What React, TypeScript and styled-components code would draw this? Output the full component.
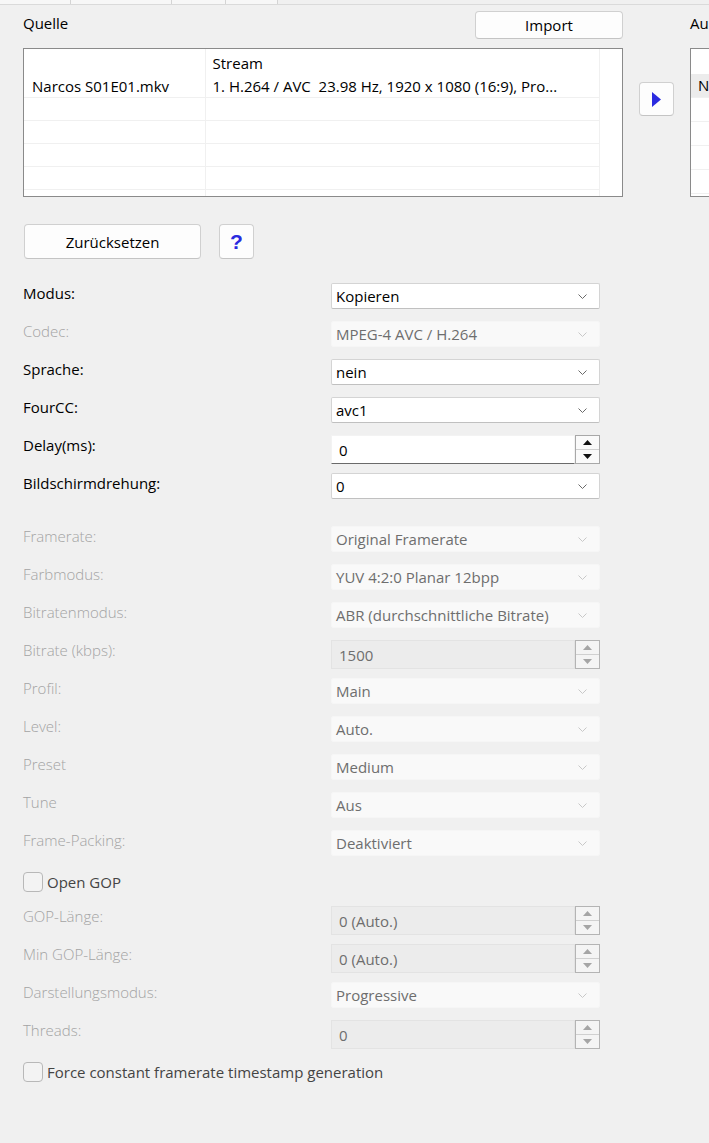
import * as React from 'react';
import styled, { createGlobalStyle } from 'styled-components';

const GlobalStyle = createGlobalStyle`
    html, body {
        margin: 0;
        padding: 0;
        background: #f0f0f0;
    }
    body {
        font-family: "Open Sans", "Noto Sans", "DejaVu Sans", sans-serif;
        font-size: 15px;
        color: #000;
    }
`;

const Page = styled.div`
    width: 709px;
    height: 1143px;
    overflow: hidden;
    background: #f0f0f0;
    display: flex;
    flex-direction: column;
`;

const TabStrip = styled.div`
    display: flex;
    height: 4px;
    border-bottom: 1px solid #dadada;
    flex-shrink: 0;
`;

const Tab = styled.div<{ $w: number }>`
    width: ${p => p.$w}px;
    height: 4px;
    background: #f7f7f7;
    border-right: 1px solid #d4d4d4;
    box-sizing: border-box;
`;

const TopArea = styled.div`
    display: grid;
    grid-template-columns: 600px 35px 200px;
    column-gap: 16px;
    padding: 6px 0 0 23px;
`;

const SourceColumn = styled.div`
    display: flex;
    flex-direction: column;
    gap: 10px;
`;

const SectionHeader = styled.div`
    display: flex;
    justify-content: space-between;
    align-items: flex-start;
    height: 27px;
`;

const Caption = styled.div`
    font-stretch: 88%;
    font-size: 15px;
    line-height: 20px;
    padding-top: 2px;
`;

const PushButton = styled.button<{ $w: number; $h: number }>`
    width: ${p => p.$w}px;
    height: ${p => p.$h}px;
    background: #fdfdfd;
    border: 1px solid #d0d0d0;
    border-bottom-color: #c4c4c4;
    border-radius: 4px;
    font-family: "Open Sans", "Noto Sans", sans-serif;
    font-stretch: 88%;
    font-size: 15px;
    color: #000;
    padding: 0;
    display: flex;
    align-items: center;
    justify-content: center;
`;

const HelpGlyph = styled.span`
    color: #2a2adf;
    font-family: "Liberation Sans", Arial, sans-serif;
    font-weight: 700;
    font-size: 21px;
`;

const TableFrame = styled.div`
    height: 149px;
    border: 1px solid #8a8a8a;
    background: #fff;
    box-sizing: border-box;
    overflow: hidden;
`;

const Table = styled.table`
    border-collapse: collapse;
    table-layout: fixed;
    width: 575px;
    font-stretch: 88%;
    font-size: 15px;
`;

const Tr = styled.tr<{ $h: number; $plain?: boolean }>`
    height: ${p => p.$h}px;
    border-bottom: ${p => (p.$plain ? 'none' : '1px solid #f0f0f0')};
`;

const Td = styled.td<{ $w?: number; $pad?: number }>`
    ${p => (p.$w ? `width: ${p.$w}px;` : '')}
    box-sizing: border-box;
    padding: 0 0 0 ${p => p.$pad ?? 7}px;
    border-right: 1px solid #f0f0f0;
    white-space: nowrap;
    overflow: hidden;
    vertical-align: bottom;
    line-height: 22px;
`;

const ArrowColumn = styled.div`
    padding-top: 71px;
`;

const OutputColumn = styled.div`
    display: flex;
    flex-direction: column;
    gap: 10px;
`;

const OutputFrame = styled.div`
    height: 149px;
    border: 1px solid #8a8a8a;
    border-right: none;
    background: #fff;
    box-sizing: border-box;
    padding-top: 25px;
`;

const OutputRow = styled.div<{ $selected?: boolean }>`
    height: 23px;
    border-bottom: 1px solid #f0f0f0;
    background: ${p => (p.$selected ? '#ececec' : '#fff')};
    padding-left: 7px;
    line-height: 23px;
    font-stretch: 88%;
`;

const ActionRow = styled.div`
    display: flex;
    gap: 18px;
    padding: 27px 0 0 24px;
`;

const Form = styled.div`
    display: flex;
    flex-direction: column;
    padding: 24px 0 0 23px;
`;

const FieldRow = styled.div`
    display: grid;
    grid-template-columns: 308px 269px;
    height: 38px;
    align-items: start;
`;

const Label = styled.div<{ $disabled?: boolean }>`
    line-height: 20px;
    font-size: 15px;
    color: ${p => (p.$disabled ? '#a3a3a3' : '#000')};
    font-weight: ${p => (p.$disabled ? 300 : 400)};
`;

const Spacer = styled.div<{ $h: number }>`
    height: ${p => p.$h}px;
`;

const ComboBox = styled.div<{ $disabled?: boolean }>`
    height: 26px;
    box-sizing: border-box;
    display: flex;
    align-items: center;
    justify-content: space-between;
    padding: 0 12px 0 4px;
    background: ${p => (p.$disabled ? '#f9f9f9' : '#fff')};
    border: 1px solid ${p => (p.$disabled ? '#f6f6f6' : '#d4d4d4')};
    border-bottom-color: ${p => (p.$disabled ? '#f6f6f6' : '#c0c0c0')};
    border-radius: 2px;
    color: ${p => (p.$disabled ? '#6e6e6e' : '#000')};
    font-size: 15px;
`;

const SpinBox = styled.div`
    display: flex;
    height: 29px;
`;

const SpinField = styled.div<{ $disabled?: boolean }>`
    flex: 1;
    box-sizing: border-box;
    display: flex;
    align-items: center;
    padding-left: 7px;
    background: ${p => (p.$disabled ? '#ececec' : '#fff')};
    border: 1px solid ${p => (p.$disabled ? '#e3e3e3' : '#f3f3f3')};
    border-bottom: 1px solid ${p => (p.$disabled ? '#e3e3e3' : '#6a6a6a')};
    color: ${p => (p.$disabled ? '#6e6e6e' : '#000')};
    font-size: 15px;
`;

const SpinButtons = styled.div<{ $disabled?: boolean }>`
    width: 25px;
    box-sizing: border-box;
    display: flex;
    flex-direction: column;
    border: 1px solid ${p => (p.$disabled ? '#b4b4b4' : '#a8a8a8')};
    background: ${p => (p.$disabled ? '#f4f4f4' : '#fafafa')};
`;

const SpinButton = styled.div<{ $disabled?: boolean }>`
    flex: 1;
    display: flex;
    align-items: center;
    justify-content: center;
    color: ${p => (p.$disabled ? '#a5a5a5' : '#111')};
    & + & {
        border-top: 1px solid ${p => (p.$disabled ? '#d0d0d0' : '#c4c4c4')};
    }
`;

const CheckRow = styled.label`
    display: flex;
    align-items: flex-start;
    gap: 4px;
    height: 38px;
    padding-top: 4px;
    box-sizing: border-box;
`;

const CheckBox = styled.span`
    width: 20px;
    height: 20px;
    box-sizing: border-box;
    border: 1px solid #b8b8b8;
    border-radius: 4px;
    background: #f3f3f3;
`;

const CheckText = styled.span`
    color: #444;
    font-stretch: 88%;
    font-size: 15px;
    line-height: 20px;
`;

const Chevron = ({ disabled }: { disabled?: boolean }) => (
    <svg width="9" height="5" viewBox="0 0 9 5">
        <path d="M0.5 0.5 L4.5 4.5 L8.5 0.5" fill="none" stroke={disabled ? '#c8c8c8' : '#6a6a6a'} strokeWidth="1" />
    </svg>
);

const Triangle = ({ up }: { up?: boolean }) => (
    <svg width="9" height="5" viewBox="0 0 9 5">
        <path d={up ? 'M0 5 L4.5 0 L9 5 Z' : 'M0 0 L4.5 5 L9 0 Z'} fill="currentColor" />
    </svg>
);

type Field =
    | { kind: 'combo'; label: string; value: string; disabled?: boolean }
    | { kind: 'spin'; label: string; value: string; disabled?: boolean }
    | { kind: 'check'; label: string }
    | { kind: 'gap'; h: number };

const fields: Field[] = [
    { kind: 'combo', label: 'Modus:', value: 'Kopieren' },
    { kind: 'combo', label: 'Codec:', value: 'MPEG-4 AVC / H.264', disabled: true },
    { kind: 'combo', label: 'Sprache:', value: 'nein' },
    { kind: 'combo', label: 'FourCC:', value: 'avc1' },
    { kind: 'spin', label: 'Delay(ms):', value: '0' },
    { kind: 'combo', label: 'Bildschirmdrehung:', value: '0' },
    { kind: 'gap', h: 15 },
    { kind: 'combo', label: 'Framerate:', value: 'Original Framerate', disabled: true },
    { kind: 'combo', label: 'Farbmodus:', value: 'YUV 4:2:0 Planar 12bpp', disabled: true },
    { kind: 'combo', label: 'Bitratenmodus:', value: 'ABR (durchschnittliche Bitrate)', disabled: true },
    { kind: 'spin', label: 'Bitrate (kbps):', value: '1500', disabled: true },
    { kind: 'combo', label: 'Profil:', value: 'Main', disabled: true },
    { kind: 'combo', label: 'Level:', value: 'Auto.', disabled: true },
    { kind: 'combo', label: 'Preset', value: 'Medium', disabled: true },
    { kind: 'combo', label: 'Tune', value: 'Aus', disabled: true },
    { kind: 'combo', label: 'Frame-Packing:', value: 'Deaktiviert', disabled: true },
    { kind: 'check', label: 'Open GOP' },
    { kind: 'spin', label: 'GOP-Länge:', value: '0 (Auto.)', disabled: true },
    { kind: 'spin', label: 'Min GOP-Länge:', value: '0 (Auto.)', disabled: true },
    { kind: 'combo', label: 'Darstellungsmodus:', value: 'Progressive', disabled: true },
    { kind: 'spin', label: 'Threads:', value: '0', disabled: true },
    { kind: 'check', label: 'Force constant framerate timestamp generation' },
];

const renderField = (f: Field, i: number) => {
    if (f.kind === 'gap') return <Spacer key={i} $h={f.h} />;
    if (f.kind === 'check') {
        return (
            <CheckRow key={i}>
                <CheckBox />
                <CheckText>{f.label}</CheckText>
            </CheckRow>
        );
    }
    return (
        <FieldRow key={i}>
            <Label $disabled={f.disabled}>{f.label}</Label>
            {f.kind === 'combo' ? (
                <ComboBox $disabled={f.disabled}>
                    <span>{f.value}</span>
                    <Chevron disabled={f.disabled} />
                </ComboBox>
            ) : (
                <SpinBox>
                    <SpinField $disabled={f.disabled}>{f.value}</SpinField>
                    <SpinButtons $disabled={f.disabled}>
                        <SpinButton $disabled={f.disabled}><Triangle up /></SpinButton>
                        <SpinButton $disabled={f.disabled}><Triangle /></SpinButton>
                    </SpinButtons>
                </SpinBox>
            )}
        </FieldRow>
    );
};

const emptyRows = [0, 1, 2, 3, 4];

const App = () => (
    <Page>
        <GlobalStyle />
        <TabStrip>
            <Tab $w={71} />
            <Tab $w={101} />
            <Tab $w={54} />
            <Tab $w={52} />
        </TabStrip>
        <TopArea>
            <SourceColumn>
                <SectionHeader>
                    <Caption>Quelle</Caption>
                    <PushButton $w={148} $h={28}>Import</PushButton>
                </SectionHeader>
                <TableFrame>
                    <Table>
                        <tbody>
                            <Tr $h={25} $plain>
                                <Td $w={181} />
                                <Td $w={394}>Stream</Td>
                            </Tr>
                            <Tr $h={23}>
                                <Td $pad={8}>Narcos S01E01.mkv</Td>
                                <Td>1. H.264 / AVC&nbsp; 23.98 Hz, 1920 x 1080 (16:9), Pro...</Td>
                            </Tr>
                            {emptyRows.map(r => (
                                <Tr key={r} $h={23}>
                                    <Td />
                                    <Td />
                                </Tr>
                            ))}
                        </tbody>
                    </Table>
                </TableFrame>
            </SourceColumn>
            <ArrowColumn>
                <PushButton $w={35} $h={34}>
                    <svg width="9" height="15" viewBox="0 0 9 15">
                        <path d="M0 0 L9 7.5 L0 15 Z" fill="#2b2be0" />
                    </svg>
                </PushButton>
            </ArrowColumn>
            <OutputColumn>
                <SectionHeader>
                    <Caption>Ausgabe</Caption>
                </SectionHeader>
                <OutputFrame>
                    <OutputRow $selected>Narcos S01E01.mkv</OutputRow>
                    <OutputRow />
                    <OutputRow />
                    <OutputRow />
                    <OutputRow />
                </OutputFrame>
            </OutputColumn>
        </TopArea>
        <ActionRow>
            <PushButton $w={177} $h={35}>Zurücksetzen</PushButton>
            <PushButton $w={35} $h={35}><HelpGlyph>?</HelpGlyph></PushButton>
        </ActionRow>
        <Form>{fields.map(renderField)}</Form>
    </Page>
);

export default App;
